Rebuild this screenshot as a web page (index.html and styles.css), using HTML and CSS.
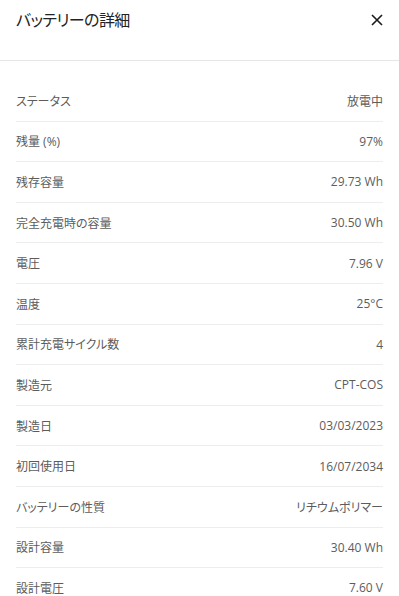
FILE: index.html
```html
<!DOCTYPE html>
<html lang="ja">
<head>
    <meta charset="UTF-8">
    <meta name="viewport" content="width=device-width, initial-scale=1.0">
    <title>バッテリーの詳細</title>
    <link rel="stylesheet" href="styles.css">
</head>
<body>
    <div class="header">
        <h1 class="title">バッテリーの詳細</h1>
        <button class="close" aria-label="閉じる">
            <svg width="12" height="12" viewBox="0 0 12 12"><path d="M1 1L11 11M11 1L1 11" stroke="#1a1a1a" stroke-width="1.6" fill="none"/></svg>
        </button>
    </div>
    <!-- 詳細リスト -->
    <div class="list">
        <div class="row"><span class="label">ステータス</span><span class="value">放電中</span></div>
        <div class="row"><span class="label">残量 (%)</span><span class="value">97%</span></div>
        <div class="row"><span class="label">残存容量</span><span class="value">29.73 Wh</span></div>
        <div class="row"><span class="label">完全充電時の容量</span><span class="value">30.50 Wh</span></div>
        <div class="row"><span class="label">電圧</span><span class="value">7.96 V</span></div>
        <div class="row"><span class="label">温度</span><span class="value">25°C</span></div>
        <div class="row"><span class="label">累計充電サイクル数</span><span class="value">4</span></div>
        <div class="row"><span class="label">製造元</span><span class="value">CPT-COS</span></div>
        <div class="row"><span class="label">製造日</span><span class="value">03/03/2023</span></div>
        <div class="row"><span class="label">初回使用日</span><span class="value">16/07/2034</span></div>
        <div class="row"><span class="label">バッテリーの性質</span><span class="value">リチウムポリマー</span></div>
        <div class="row"><span class="label">設計容量</span><span class="value">30.40 Wh</span></div>
        <div class="row"><span class="label">設計電圧</span><span class="value">7.60 V</span></div>
    </div>
</body>
</html>
```

FILE: styles.css
```css
body {
    margin: 0;
    background: #fff;
    font-family: "Open Sans", "Noto Sans CJK JP", sans-serif;
    font-feature-settings: "palt";
    color: #5c5c5c;
}
.header {
    height: 60px;
    border-bottom: 1px solid #e6e6e6;
    display: flex;
    align-items: flex-start;
    justify-content: space-between;
    padding: 0 16px;
}
.title {
    margin: 8px 0 0;
    font-size: 16px;
    letter-spacing: -0.6px;
    font-weight: normal;
    color: #222;
    line-height: 24px;
}
.close {
    border: none;
    background: none;
    padding: 0;
    margin-top: 14px;
    width: 12px;
    height: 12px;
    cursor: pointer;
}
.close svg {
    display: block;
}
.list {
    padding: 20px 16px 0;
}
.row {
    height: 39.6px;
    border-bottom: 1px solid #ededed;
    display: flex;
    align-items: center;
    justify-content: space-between;
    font-size: 12px;
}
.value {
    color: #5c5c5c;
}
```
